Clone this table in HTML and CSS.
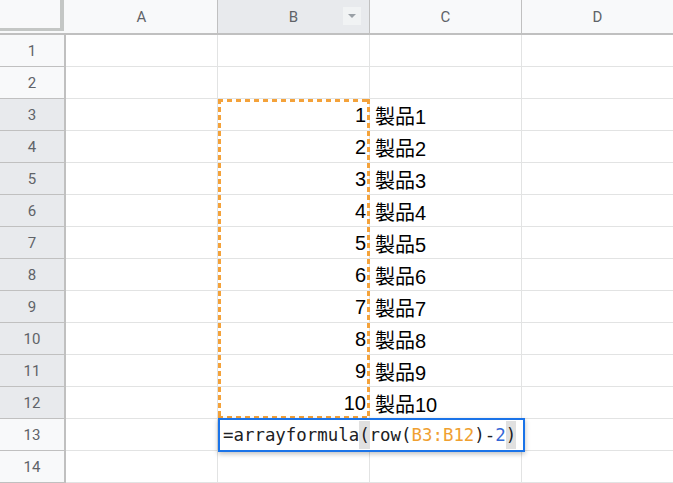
FILE: index.html
```html
<!DOCTYPE html>
<html lang="ja">
<head>
<meta charset="utf-8">
<title>Sheet</title>
<link rel="stylesheet" href="styles.css">
</head>
<body>
<div class="sheet">
  <div class="corner"></div>
  <div class="ch">A</div>
  <div class="ch sel">B<span class="dd"></span></div>
  <div class="ch">C</div>
  <div class="ch">D</div>

  <div class="rh">1</div><div class="c"></div><div class="c"></div><div class="c"></div><div class="c"></div>
  <div class="rh">2</div><div class="c"></div><div class="c"></div><div class="c"></div><div class="c"></div>
  <div class="rh hl">3</div><div class="c"></div><div class="c num">1</div><div class="c">製品1</div><div class="c"></div>
  <div class="rh hl">4</div><div class="c"></div><div class="c num">2</div><div class="c">製品2</div><div class="c"></div>
  <div class="rh hl">5</div><div class="c"></div><div class="c num">3</div><div class="c">製品3</div><div class="c"></div>
  <div class="rh hl">6</div><div class="c"></div><div class="c num">4</div><div class="c">製品4</div><div class="c"></div>
  <div class="rh hl">7</div><div class="c"></div><div class="c num">5</div><div class="c">製品5</div><div class="c"></div>
  <div class="rh hl">8</div><div class="c"></div><div class="c num">6</div><div class="c">製品6</div><div class="c"></div>
  <div class="rh hl">9</div><div class="c"></div><div class="c num">7</div><div class="c">製品7</div><div class="c"></div>
  <div class="rh hl">10</div><div class="c"></div><div class="c num">8</div><div class="c">製品8</div><div class="c"></div>
  <div class="rh hl">11</div><div class="c"></div><div class="c num">9</div><div class="c">製品9</div><div class="c"></div>
  <div class="rh hl">12</div><div class="c"></div><div class="c num">10</div><div class="c">製品10</div><div class="c"></div>
  <div class="rh">13</div><div class="c"></div><div class="c"></div><div class="c"></div><div class="c"></div>
  <div class="rh">14</div><div class="c"></div><div class="c"></div><div class="c"></div><div class="c"></div>

  <div class="copy-sel"></div>
  <div class="editor"><span>=arrayformula</span><span class="pm">(</span><span>row(</span><span class="ref">B3:B12</span><span>)-</span><span class="n">2</span><span class="pm">)</span></div>
</div>
</body>
</html>
```

FILE: styles.css
```css
html, body {
  margin: 0;
  padding: 0;
  background: #ffffff;
  overflow: hidden;
}

.sheet {
  position: relative;
  display: grid;
  grid-template-columns: 66px 152px 152px 152px 152px;
  grid-template-rows: 35px repeat(14, 32px);
  width: 674px;
}

.corner {
  background: #f8f9fa;
  border-bottom: 2px solid #c0c0c0;
  position: relative;
}

.corner::after {
  content: "";
  position: absolute;
  left: 0;
  top: 0;
  width: 60px;
  height: 28px;
  border-right: 4px solid #c4c7c5;
  border-bottom: 3px solid #c4c7c5;
}

.ch {
  position: relative;
  display: flex;
  align-items: center;
  justify-content: center;
  background: #f8f9fa;
  border-right: 1px solid #c0c0c0;
  border-bottom: 2px solid #c0c0c0;
  font-family: Roboto, "Liberation Sans", sans-serif;
  font-size: 15px;
  color: #5f6368;
}

.ch.sel {
  background: #e8eaed;
}

.dd {
  position: absolute;
  right: 8px;
  top: 7px;
  width: 18px;
  height: 18px;
  background: #f1f3f4;
}

.dd::after {
  content: "";
  position: absolute;
  left: 5px;
  top: 7px;
  border-left: 4px solid transparent;
  border-right: 4px solid transparent;
  border-top: 4px solid #9aa0a6;
}

.rh {
  display: flex;
  align-items: center;
  justify-content: center;
  background: #f8f9fa;
  border-right: 2px solid #c0c0c0;
  border-bottom: 1px solid #c0c0c0;
  font-family: Roboto, "Liberation Sans", sans-serif;
  font-size: 15px;
  color: #5f6368;
}

.rh.hl {
  background: #e8eaed;
}

.c {
  display: flex;
  align-items: center;
  padding: 1px 5px 0 5px;
  border-right: 1px solid #e2e3e3;
  border-bottom: 1px solid #e2e3e3;
  font-family: "Liberation Sans", "Noto Sans CJK JP", sans-serif;
  font-size: 20px;
  color: #000000;
  white-space: nowrap;
}

.c.num {
  justify-content: flex-end;
  padding-right: 3px;
}

.copy-sel {
  position: absolute;
  left: 218px;
  top: 99px;
  width: 152px;
  height: 320px;
  background:
    repeating-linear-gradient(90deg, #f4a23a 0 5px, transparent 5px 9px) left top / 100% 3px no-repeat,
    repeating-linear-gradient(90deg, #f4a23a 0 5px, transparent 5px 9px) left bottom / 100% 3px no-repeat,
    repeating-linear-gradient(180deg, #f4a23a 0 5px, transparent 5px 8px) left top / 3px 100% no-repeat,
    repeating-linear-gradient(180deg, #f4a23a 0 5px, transparent 5px 8px) right top / 3px 100% no-repeat;
  pointer-events: none;
}

.editor {
  position: absolute;
  left: 218px;
  top: 418px;
  width: 307px;
  height: 34px;
  box-sizing: border-box;
  border: 2px solid #1a73e8;
  background: #ffffff;
  box-shadow: 0 2px 5px rgba(0, 0, 0, 0.25);
  display: flex;
  align-items: stretch;
  padding-left: 3px;
  font-family: "DejaVu Sans Mono", "Liberation Mono", monospace;
  font-size: 17.4px;
  color: #202124;
  white-space: pre;
}

.editor span {
  display: flex;
  align-items: center;
}

.editor .pm {
  background: #e0e0e0;
  margin: 1px 0;
}

.editor .ref {
  color: #f0a030;
}

.editor .n {
  color: #3367d6;
}
```
